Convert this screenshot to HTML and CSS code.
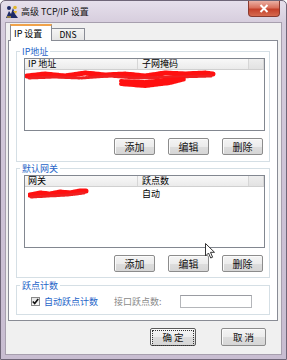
FILE: index.html
```html
<!DOCTYPE html>
<html lang="zh-CN">
<head>
<meta charset="utf-8">
<title>高级 TCP/IP 设置</title>
<link rel="stylesheet" href="styles.css">
</head>
<body>
<div class="window">
  <div class="titlebar">
    <svg class="app-icon" width="14" height="14" viewBox="0 0 14 14">
      <path d="M1 13 L4 6 L6 9 L8 3 L10 9 L13 13 Z" fill="#1d2a66"/>
      <circle cx="4" cy="3" r="2" fill="#1d2a66"/>
      <circle cx="10" cy="2.5" r="1.8" fill="#e2b62c"/>
      <path d="M8 6 L12 6 L11 9 Z" fill="#e2b62c"/>
      <path d="M2 12 L6 12" stroke="#e2b62c" stroke-width="1.2"/>
    </svg>
    <span class="title">高级 TCP/IP 设置</span>
    <div class="close"><svg width="10" height="9" viewBox="0 0 10 9"><path d="M1.5 1 L8.5 8 M8.5 1 L1.5 8" stroke="#fff" stroke-width="2"/></svg></div>
  </div>
  <div class="client">
    <div class="tabs">
      <div class="tab active">IP 设置</div>
      <div class="tab">DNS</div>
    </div>
    <div class="panel">
      <fieldset class="group g1">
        <legend>IP地址</legend>
        <div class="list">
          <div class="lhead">
            <span class="c1">IP 地址</span><span class="c2">子网掩码</span><span class="c3"></span>
          </div>
          <div class="lrow">
            <svg class="scribble" width="200" height="22" viewBox="0 0 200 22">
              <path d="M2 6 L20 4 L40 6 L60 3 L80 5 L100 4 L120 6 L140 3 L160 4 L180 3 L188 4" stroke="#ff1010" stroke-width="5" fill="none" stroke-linecap="round" stroke-dasharray="3 1"/>
              <path d="M4 8 L30 7 L55 8 L85 6 L110 8 L150 7 L186 6" stroke="#f02020" stroke-width="3" fill="none" stroke-linecap="round" stroke-dasharray="2 1.5"/>
              <path d="M96 11 L120 12 L140 10 L160 9 L145 13 L120 16 L96 14" stroke="#ff1010" stroke-width="4" fill="none" stroke-linecap="round" stroke-dasharray="3 1"/>
            </svg>
          </div>
        </div>
        <div class="btnrow">
          <button class="btn">添加</button>
          <button class="btn">编辑</button>
          <button class="btn">删除</button>
        </div>
      </fieldset>
      <fieldset class="group g2">
        <legend>默认网关</legend>
        <div class="list">
          <div class="lhead">
            <span class="c1">网关</span><span class="c2">跃点数</span><span class="c3"></span>
          </div>
          <div class="lrow">
            <span class="c1 cell">
              <svg class="scribble" width="62" height="12" viewBox="0 0 62 12">
                <path d="M2 7 L12 5 L22 6 L32 4 L42 5 L52 3 L58 3" stroke="#ff1010" stroke-width="5" fill="none" stroke-linecap="round" stroke-dasharray="3 1"/>
                <path d="M3 9 L20 8 L40 7 L56 5" stroke="#f02020" stroke-width="3" fill="none" stroke-linecap="round" stroke-dasharray="2 1.5"/>
              </svg>
            </span><span class="c2 cell">自动</span>
          </div>
        </div>
        <div class="btnrow">
          <button class="btn">添加</button>
          <button class="btn">编辑</button>
          <button class="btn">删除</button>
        </div>
      </fieldset>
      <fieldset class="group g3">
        <legend>跃点计数</legend>
        <div class="metric">
          <div class="check"><svg width="7" height="7" viewBox="0 0 7 7"><path d="M0.8 3.5 L2.7 5.6 L6.2 1" stroke="#111" stroke-width="1.6" fill="none"/></svg></div>
          <div class="auto">自动跃点计数</div>
          <div class="iflabel">接口跃点数:</div>
          <div class="input"></div>
        </div>
      </fieldset>
    </div>
    <div class="footer">
      <button class="btn big default"><span class="focus">确 定</span></button>
      <button class="btn big">取 消</button>
    </div>
  </div>
  <svg class="cursor" width="11" height="17" viewBox="0 0 11 17">
    <path d="M0.5 0.5 L0.5 13 L3.5 10 L5.7 15 L7.6 14.2 L5.5 9.3 L9.5 9.3 Z" fill="#fff" stroke="#333" stroke-width="1" stroke-linejoin="round"/>
  </svg>
</div>
</body>
</html>
```
FILE: styles.css
```css
html, body {
  margin: 0;
  padding: 0;
}
body {
  width: 287px;
  height: 360px;
  overflow: hidden;
  background: #fff;
  font-family: "Noto Sans CJK SC", "Liberation Sans", sans-serif;
  font-size: 9px;
  color: #000;
}
.window {
  position: relative;
  box-sizing: border-box;
  width: 287px;
  height: 360px;
  border: 1px solid #6f6678;
  border-radius: 5px 5px 0 0;
  background: linear-gradient(#e6e0ec, #d6cddd 22px, #cdc2d6 200px, #c8bdd1);
  padding: 0 4px 4px 4px;
  display: flex;
  flex-direction: column;
}
.titlebar {
  height: 21px;
  display: flex;
  align-items: center;
  flex: none;
}
.app-icon {
  margin-top: 1px;
  flex: none;
}
.title {
  margin-left: 2px;
  line-height: 11px;
  color: #111;
  white-space: nowrap;
}
.close {
  margin-left: auto;
  margin-right: 2px;
  align-self: flex-start;
  width: 32px;
  height: 16px;
  box-sizing: border-box;
  border: 1px solid #8a3a30;
  border-top: none;
  border-radius: 0 0 4px 4px;
  background: linear-gradient(#eab0a4, #d9705c 45%, #c4402a 55%, #d66a50);
  display: flex;
  align-items: center;
  justify-content: center;
}
.client {
  flex: 1;
  box-sizing: border-box;
  background: #f0f0f0;
  border: 1px solid #a79fae;
  padding: 1px 3px 0 2px;
  display: flex;
  flex-direction: column;
}
.tabs {
  display: flex;
  align-items: flex-end;
  height: 16px;
  padding-left: 2px;
}
.tab {
  box-sizing: border-box;
  height: 12px;
  line-height: 11px;
  border: 1px solid #898c95;
  border-bottom: none;
  background: linear-gradient(#f5f5f5, #e4e4e4);
  padding: 0 5px;
  width: 34px;
  margin-left: -1px;
  text-align: center;
  font-size: 8.5px;
}
.tab.active {
  position: relative;
  z-index: 1;
  height: 17px;
  width: 42px;
  margin-left: 0;
  margin-bottom: -1px;
  background: #fff;
  border-top: 2px solid #f0a24a;
  padding: 2px 0 0 3px;
  text-align: left;
  font-size: 9px;
}
.panel {
  box-sizing: border-box;
  height: 281px;
  background: #fff;
  border: 1px solid #898c95;
  padding: 5px 7px 5px 7px;
  display: flex;
  flex-direction: column;
}
.group {
  box-sizing: border-box;
  margin: 0;
  min-width: 0;
  border: 1px solid #d5dfe5;
  padding: 0 4px 6px 7px;
}
.group legend {
  padding: 0 2px;
  margin-left: -4px;
  line-height: 11px;
  height: 11px;
  color: #1e64c8;
  font-size: 9px;
}
.g1 { height: 116px; }
.g2 { height: 115px; margin-top: 1px; padding-bottom: 5px; }
.g3 { height: 35px; margin-top: 2px; }
.list {
  box-sizing: border-box;
  height: 73px;
  margin-top: 1px;
  border: 1px solid #828790;
  background: #fff;
}
.lhead {
  display: flex;
  height: 11px;
  box-sizing: border-box;
  border-bottom: 1px solid #d0d0d0;
  background: linear-gradient(#f8f8f8, #ebebeb);
  line-height: 10px;
}
.lhead span {
  box-sizing: border-box;
  border-right: 1px solid #d6d6d6;
  white-space: nowrap;
}
.c1 { width: 113px; padding-left: 3px; flex: none; box-sizing: border-box; }
.c2 { width: 111px; padding-left: 4px; flex: none; box-sizing: border-box; }
.c3 { flex: 1; background: linear-gradient(#eeeeee, #e2e2e2); }
.lrow {
  display: flex;
  height: 22px;
  align-items: flex-start;
}
.cell {
  padding-top: 1px;
  line-height: 11px;
}
.scribble {
  display: block;
}
.btnrow {
  display: flex;
  justify-content: flex-end;
  gap: 13px;
  margin-top: 7px;
  padding-right: 2px;
}
.btn {
  box-sizing: border-box;
  flex: none;
  width: 41px;
  height: 17px;
  margin: 0;
  padding: 0;
  border: 1px solid #8c8c8c;
  border-radius: 2px;
  background: linear-gradient(#f4f4f4, #ececec 50%, #dddddd 51%, #d6d6d6);
  box-shadow: inset 1px 1px 0 #fbfbfb;
  font-family: "Noto Sans CJK SC", "Liberation Sans", sans-serif;
  font-size: 10px;
  line-height: 14px;
  color: #111;
}
.metric {
  display: grid;
  grid-template-columns: 9px 74px 66px 72px;
  column-gap: 0;
  align-items: center;
  height: 13px;
  margin-top: 4px;
  padding-left: 7px;
}
.check {
  box-sizing: border-box;
  width: 9px;
  height: 9px;
  border: 1px solid #8a8a8a;
  background: linear-gradient(#e6e6e6, #fafafa);
  display: flex;
  align-items: center;
  justify-content: center;
}
.auto {
  padding-left: 4px;
  color: #1e64c8;
  white-space: nowrap;
  line-height: 11px;
}
.iflabel {
  color: #8a8a8a;
  white-space: nowrap;
  line-height: 11px;
}
.input {
  box-sizing: border-box;
  width: 72px;
  height: 13px;
  border: 1px solid #b4b6ba;
  border-top-color: #9a9ca2;
  background: #fff;
}
.footer {
  display: flex;
  justify-content: flex-end;
  gap: 25px;
  margin-top: 7px;
  padding-right: 12px;
}
.btn.big {
  width: 45px;
  height: 18px;
  font-size: 9.5px;
}
.btn.default {
  width: 46px;
  border-color: #5a5a5a;
  padding: 1px;
}
.focus {
  display: block;
  height: 14px;
  border: 1px dotted #333;
  line-height: 13px;
}
.cursor {
  position: absolute;
  left: 204px;
  top: 242px;
}
```
